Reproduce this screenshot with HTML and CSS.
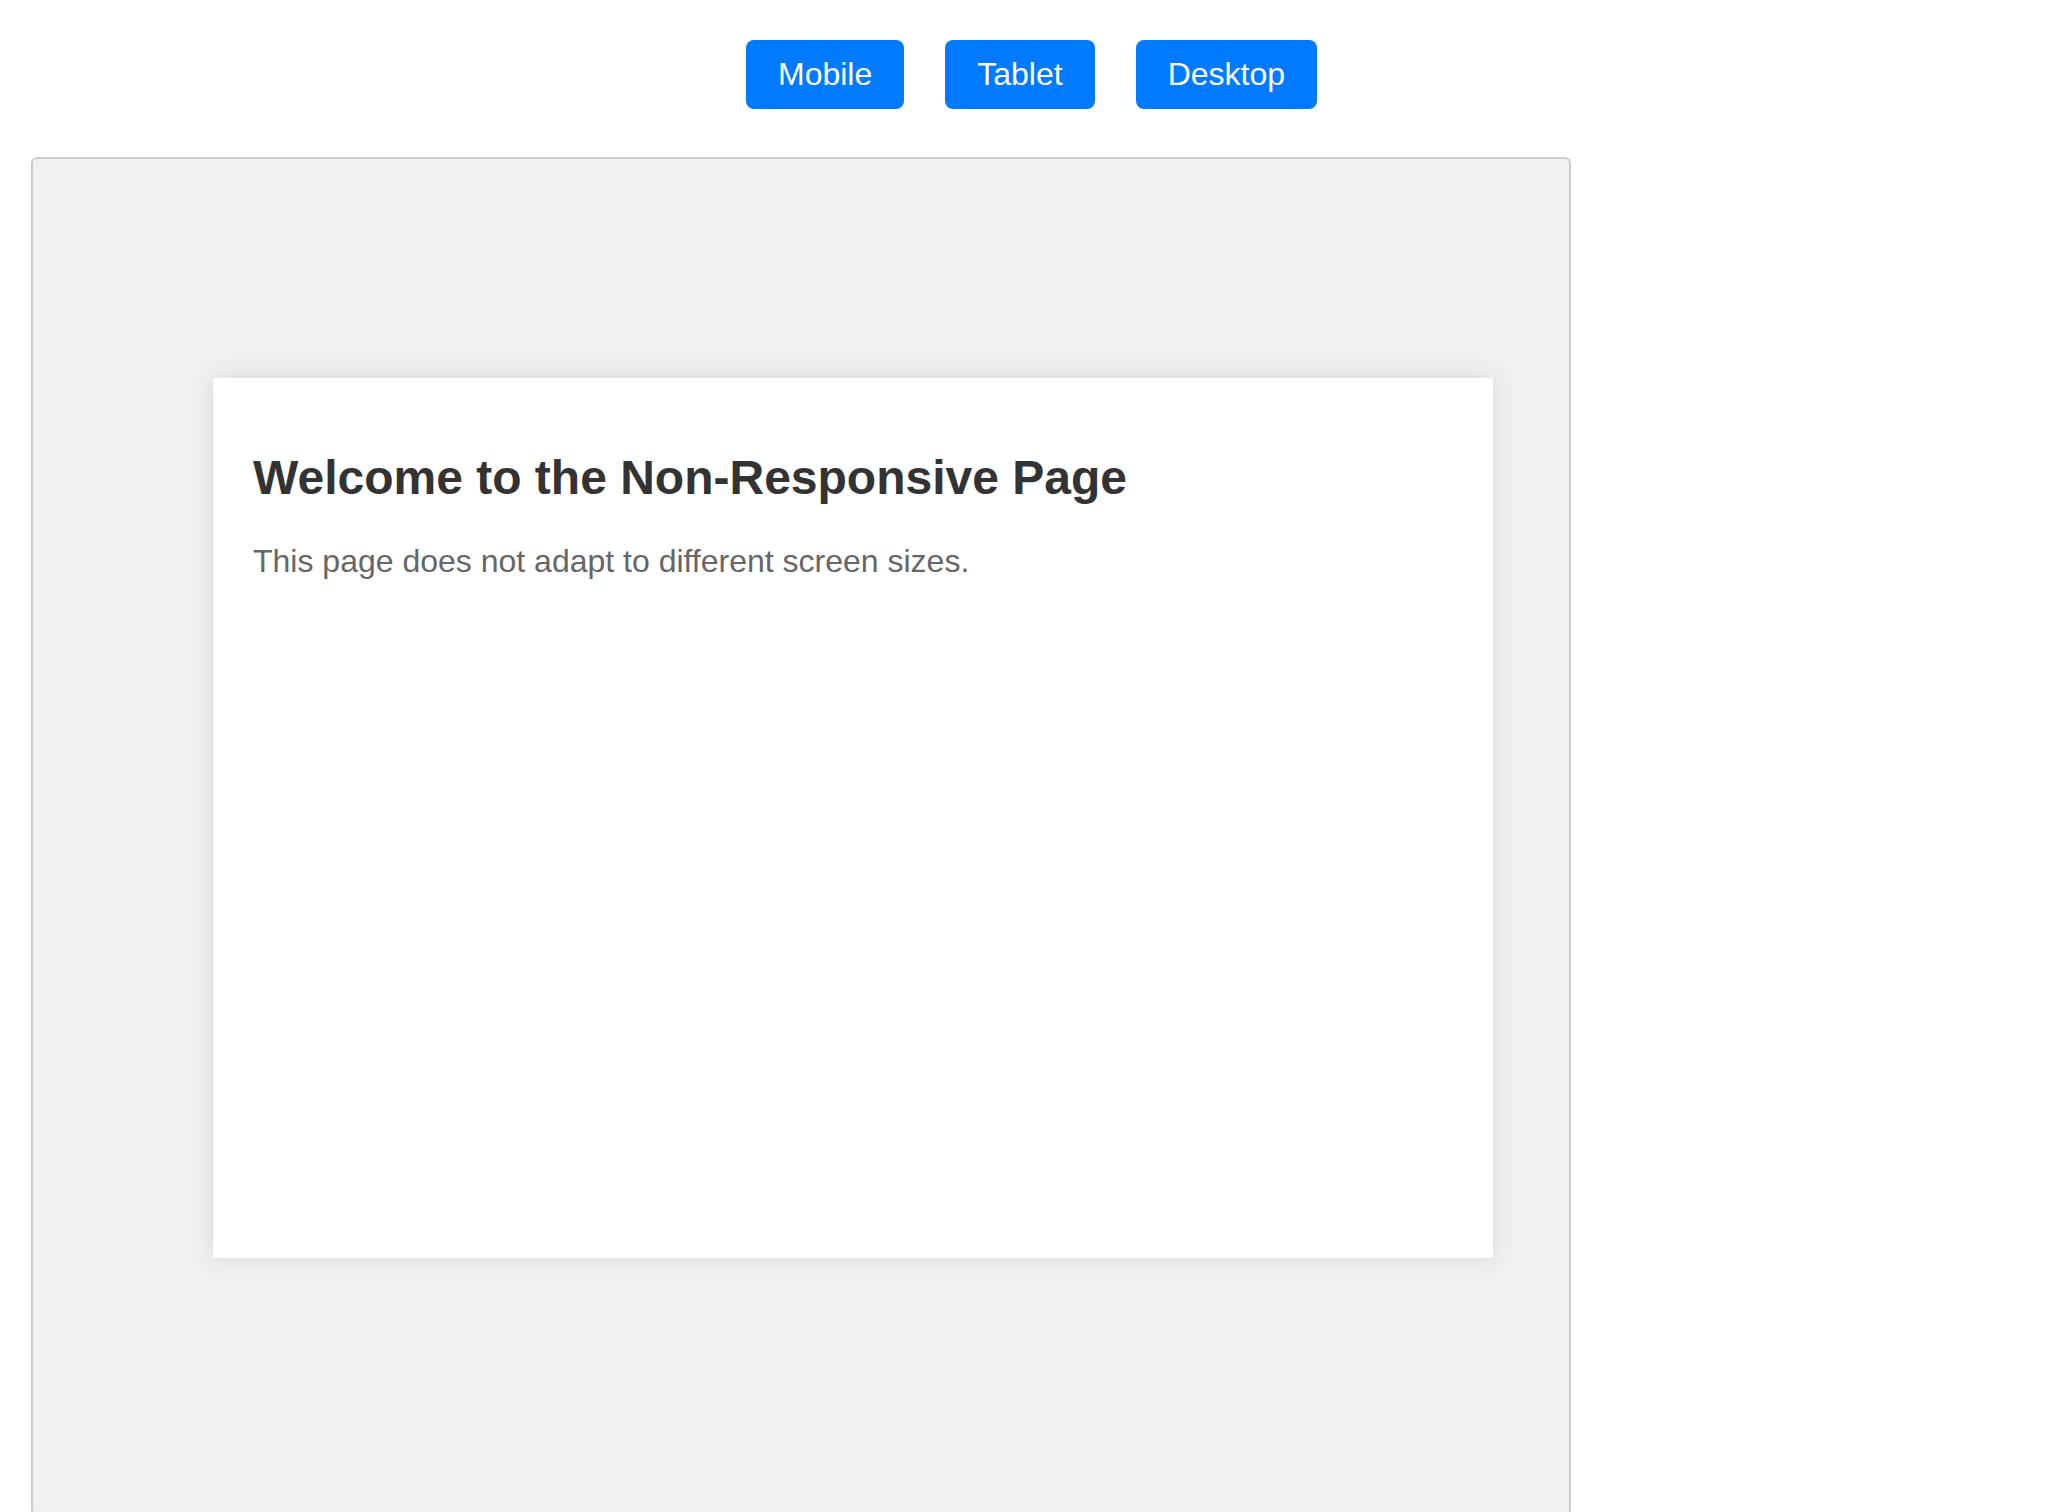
FILE: index.html
```html
<!DOCTYPE html>
<html lang="en">
<head>
<meta charset="utf-8">
<title>Responsive Preview</title>
<link rel="stylesheet" href="styles.css">
</head>
<body>
  <div class="toolbar">
    <button class="device-btn">Mobile</button>
    <button class="device-btn">Tablet</button>
    <button class="device-btn">Desktop</button>
  </div>
  <div class="preview">
    <div class="page-card">
      <h1 class="page-title">Welcome to the Non-Responsive Page</h1>
      <p class="page-text">This page does not adapt to different screen sizes.</p>
    </div>
  </div>
</body>
</html>
```

FILE: styles.css
```css
html, body {
  margin: 0;
  padding: 0;
  overflow: hidden;
  background: #ffffff;
  font-family: "Liberation Sans", Arial, sans-serif;
}

.toolbar {
  display: flex;
  justify-content: center;
  gap: 41px;
  padding-top: 40px;
  padding-left: 4px;
}

.device-btn {
  font-family: "Liberation Sans", Arial, sans-serif;
  font-size: 32px;
  line-height: normal;
  padding: 16px 32px;
  border: none;
  border-radius: 8px;
  background: #007bff;
  color: #ffffff;
  cursor: pointer;
}

.preview {
  margin: 48px 0 0 31px;
  width: 1356px;
  height: 1136px;
  border: 2px solid #cccccc;
  border-radius: 6px;
  background: #f0f0f0;
  padding: 219px 0 0 180px;
  box-sizing: content-box;
}

.page-card {
  width: 1200px;
  height: 800px;
  padding: 40px;
  background: #ffffff;
  box-shadow: 0 0 20px rgba(0, 0, 0, 0.1);
  display: flow-root;
}

.page-title {
  margin: 32px 0;
  font-size: 48px;
  font-weight: bold;
  line-height: normal;
  color: #333333;
}

.page-text {
  margin: 32px 0;
  font-size: 32px;
  line-height: 1.5;
  color: #666666;
}
```
